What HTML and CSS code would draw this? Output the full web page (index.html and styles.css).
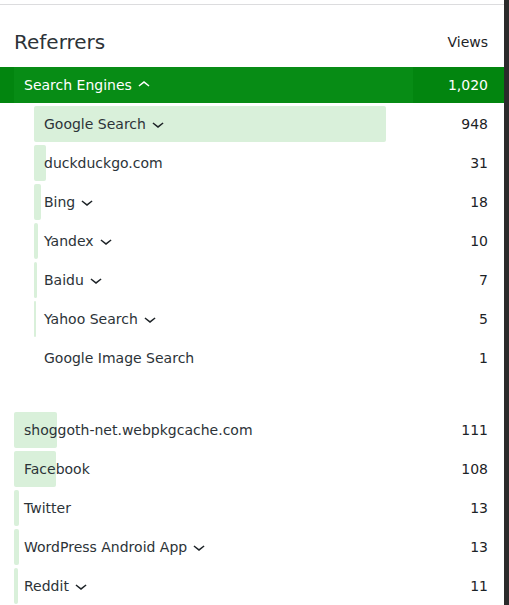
FILE: index.html
```html
<!DOCTYPE html>
<html lang="en">

<head>
    <meta charset="UTF-8">
    <meta name="viewport" content="width=device-width, initial-scale=1.0">
    <title>Referrers</title>
    <link rel="stylesheet" href="styles.css">
</head>

<body>
    <div class="page">
        <div class="panel">
            <!-- Header -->
            <div class="header">
                <h2 class="title">Referrers</h2>
                <span class="views">Views</span>
            </div>

            <!-- Search engines group -->
            <div class="row selected">
                <div class="label">
                    <span class="bar" style="width: 100%"></span>
                    <span class="text">Search Engines</span>
                    <svg class="chevron" viewBox="0 0 24 24" width="24" height="24"><path d="M6.5 12.4L12 8l5.5 4.4-.9 1.2L12 10l-4.6 3.6-1-1.2z"/></svg>
                </div>
                <div class="value">1,020</div>
            </div>

            <div class="row child">
                <div class="label">
                    <span class="bar" style="width: 92.94%"></span>
                    <span class="text">Google Search</span>
                    <svg class="chevron" viewBox="0 0 24 24" width="24" height="24"><path d="M17.5 11.6L12 16l-5.5-4.4.9-1.2L12 14l4.6-3.6 1 1.2z"/></svg>
                </div>
                <div class="value">948</div>
            </div>
            <div class="row child">
                <div class="label">
                    <span class="bar" style="width: 3.04%"></span>
                    <span class="text">duckduckgo.com</span>
                </div>
                <div class="value">31</div>
            </div>
            <div class="row child">
                <div class="label">
                    <span class="bar" style="width: 1.76%"></span>
                    <span class="text">Bing</span>
                    <svg class="chevron" viewBox="0 0 24 24" width="24" height="24"><path d="M17.5 11.6L12 16l-5.5-4.4.9-1.2L12 14l4.6-3.6 1 1.2z"/></svg>
                </div>
                <div class="value">18</div>
            </div>
            <div class="row child">
                <div class="label">
                    <span class="bar" style="width: 0.98%"></span>
                    <span class="text">Yandex</span>
                    <svg class="chevron" viewBox="0 0 24 24" width="24" height="24"><path d="M17.5 11.6L12 16l-5.5-4.4.9-1.2L12 14l4.6-3.6 1 1.2z"/></svg>
                </div>
                <div class="value">10</div>
            </div>
            <div class="row child">
                <div class="label">
                    <span class="bar" style="width: 0.69%"></span>
                    <span class="text">Baidu</span>
                    <svg class="chevron" viewBox="0 0 24 24" width="24" height="24"><path d="M17.5 11.6L12 16l-5.5-4.4.9-1.2L12 14l4.6-3.6 1 1.2z"/></svg>
                </div>
                <div class="value">7</div>
            </div>
            <div class="row child">
                <div class="label">
                    <span class="bar" style="width: 0.49%"></span>
                    <span class="text">Yahoo Search</span>
                    <svg class="chevron" viewBox="0 0 24 24" width="24" height="24"><path d="M17.5 11.6L12 16l-5.5-4.4.9-1.2L12 14l4.6-3.6 1 1.2z"/></svg>
                </div>
                <div class="value">5</div>
            </div>
            <div class="row child group-end">
                <div class="label">
                    <span class="text">Google Image Search</span>
                </div>
                <div class="value">1</div>
            </div>

            <!-- Other referrers -->
            <div class="row">
                <div class="label">
                    <span class="bar" style="width: 10.88%"></span>
                    <span class="text">shoggoth-net.webpkgcache.com</span>
                </div>
                <div class="value">111</div>
            </div>
            <div class="row">
                <div class="label">
                    <span class="bar" style="width: 10.59%"></span>
                    <span class="text">Facebook</span>
                </div>
                <div class="value">108</div>
            </div>
            <div class="row">
                <div class="label">
                    <span class="bar" style="width: 1.27%"></span>
                    <span class="text">Twitter</span>
                </div>
                <div class="value">13</div>
            </div>
            <div class="row">
                <div class="label">
                    <span class="bar" style="width: 1.27%"></span>
                    <span class="text">WordPress Android App</span>
                    <svg class="chevron" viewBox="0 0 24 24" width="24" height="24"><path d="M17.5 11.6L12 16l-5.5-4.4.9-1.2L12 14l4.6-3.6 1 1.2z"/></svg>
                </div>
                <div class="value">13</div>
            </div>
            <div class="row">
                <div class="label">
                    <span class="bar" style="width: 1.08%"></span>
                    <span class="text">Reddit</span>
                    <svg class="chevron" viewBox="0 0 24 24" width="24" height="24"><path d="M17.5 11.6L12 16l-5.5-4.4.9-1.2L12 14l4.6-3.6 1 1.2z"/></svg>
                </div>
                <div class="value">11</div>
            </div>
        </div>
        <div class="scrollbar"></div>
    </div>
</body>

</html>
```

FILE: styles.css
```css
body {
    margin: 0;
    font-family: "DejaVu Sans", Verdana, sans-serif;
    color: #2c3338;
    background: #fff;
}

.page {
    display: flex;
    height: 605px;
    overflow: hidden;
}

.panel {
    flex: 1;
    margin-top: 4px;
    border-top: 1px solid #dcdcde;
}

.scrollbar {
    width: 5px;
    background: #2b2b2b;
}

/* Header */
.header {
    display: flex;
    align-items: center;
    justify-content: space-between;
    height: 28px;
    margin: 23px 0 11px;
    padding: 0 16px 0 14px;
}

.title {
    margin: 0;
    font-size: 20px;
    font-weight: normal;
    color: #2c3338;
}

.views {
    font-size: 14px;
    color: #1d2327;
}

/* Rows */
.row {
    display: flex;
    align-items: center;
    height: 36px;
    margin-bottom: 3px;
    padding: 0 16px 0 14px;
    font-size: 14px;
}

.row.child {
    padding-left: 34px;
}

.row.group-end {
    margin-bottom: 36px;
}

.label {
    flex: 1;
    position: relative;
    display: flex;
    align-items: center;
    height: 100%;
    padding-left: 10px;
}

.bar {
    position: absolute;
    left: 0;
    top: 0;
    bottom: 0;
    background: #d9f0da;
    border-radius: 2px;
}

.text {
    position: relative;
    white-space: nowrap;
}

.chevron {
    position: relative;
    fill: #1d2327;
}

.value {
    width: 75px;
    text-align: right;
    color: #1d2327;
}

/* Selected group */
.row.selected {
    background: #02850f;
    color: #fff;
}

.row.selected .bar {
    background: #078c15;
    border-radius: 0;
}

.row.selected .chevron {
    fill: #fff;
}

.row.selected .value {
    color: #fff;
}
```
